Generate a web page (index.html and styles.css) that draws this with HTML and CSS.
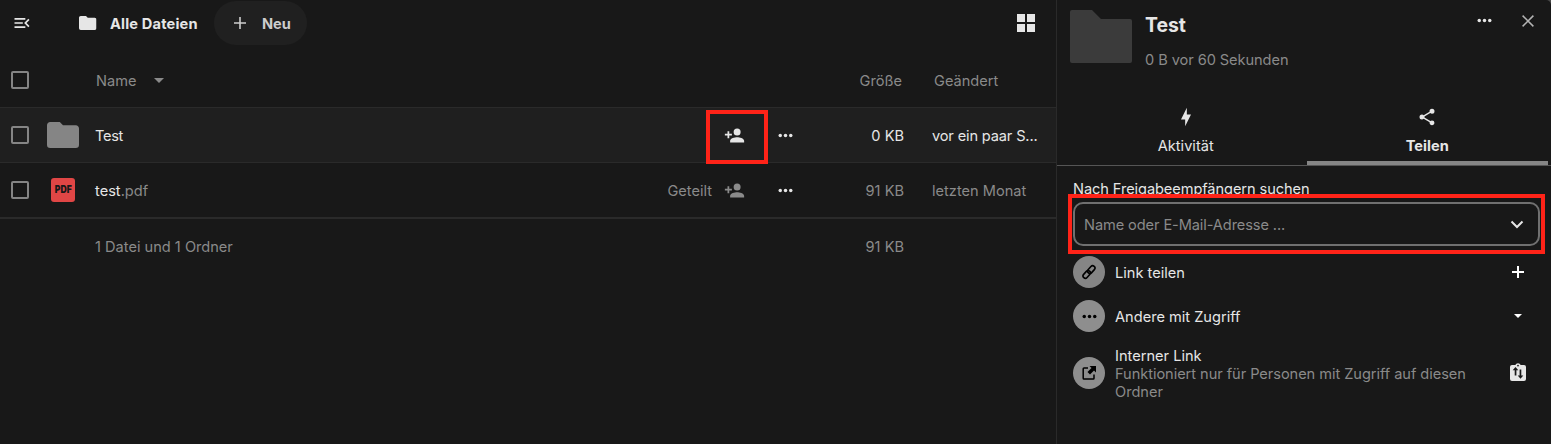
FILE: index.html
```html
<!DOCTYPE html>
<html lang="de">
<head>
<meta charset="utf-8">
<title>Alle Dateien</title>
<link rel="stylesheet" href="styles.css">
</head>
<body>
<svg class="defs" width="0" height="0">
  <symbol id="i-menu" viewBox="0 0 24 24"><path d="M21,15.61L19.59,17L14.58,12L19.59,7L21,8.39L17.44,12L21,15.61M3,6H16V8H3V6M3,13V11H13V13H3M3,18V16H16V18H3Z"/></symbol>
  <symbol id="i-folder" viewBox="2 4 20 16" preserveAspectRatio="none"><path d="M10,4H4C2.89,4 2,4.89 2,6V18A2,2 0 0,0 4,20H20A2,2 0 0,0 22,18V8C22,6.89 21.1,6 20,6H12L10,4Z"/></symbol>
  <symbol id="i-userplus" viewBox="0 0 24 24"><path d="M15,14C12.33,14 7,15.33 7,18V20H23V18C23,15.33 17.67,14 15,14M6,10V7H4V10H1V12H4V15H6V12H9V10M15,12A4,4 0 0,0 19,8A4,4 0 0,0 15,4A4,4 0 0,0 11,8A4,4 0 0,0 15,12Z"/></symbol>
  <symbol id="i-dots" viewBox="0 0 24 24"><circle cx="6" cy="12" r="2"/><circle cx="12" cy="12" r="2"/><circle cx="18" cy="12" r="2"/></symbol>
  <symbol id="i-share" viewBox="0 0 24 24"><path d="M18,16.08C17.24,16.08 16.56,16.38 16.04,16.85L8.91,12.7C8.96,12.47 9,12.24 9,12C9,11.76 8.96,11.53 8.91,11.3L15.96,7.19C16.5,7.69 17.21,8 18,8A3,3 0 0,0 21,5A3,3 0 0,0 18,2A3,3 0 0,0 15,5C15,5.24 15.04,5.47 15.09,5.7L8.04,9.81C7.5,9.31 6.79,9 6,9A3,3 0 0,0 3,12A3,3 0 0,0 6,15C6.79,15 7.5,14.69 8.04,14.19L15.16,18.34C15.11,18.55 15.08,18.77 15.08,19C15.08,20.61 16.39,21.91 18,21.91C19.61,21.91 20.92,20.61 20.92,19A2.92,2.92 0 0,0 18,16.08Z"/></symbol>
  <symbol id="i-bolt" viewBox="0 0 24 24"><path d="M11 15H6L13 1V9H18L11 23V15Z"/></symbol>
</svg>
<div class="app">
  <main class="files">
    <header class="bar">
      <svg class="ic20"><use href="#i-menu"/></svg>
      <svg class="crumb-folder"><use href="#i-folder"/></svg>
      <span class="crumb">Alle Dateien</span>
      <button class="new"><svg width="12" height="12" viewBox="0 0 12 12"><path d="M5.2 0h1.600v5.200H12v1.600H6.800V12H5.200V6.800H0V5.200h5.200z"/></svg><span class="t">Neu</span></button>
      <svg class="grid" width="18" height="18"><path d="M0 0h8v8H0zM10 0h8v8h-8zM0 10h8v8H0zM10 10h8v8h-8z"/></svg>
    </header>
    <div class="row head">
      <i class="check"></i><span></span>
      <span class="name"><span class="t">Name</span><svg width="10" height="5"><path d="M0 0h10L5 5z"/></svg></span>
      <span></span><span></span><span></span>
      <span class="size"><span class="t">Größe</span></span><span class="date"><span class="t">Geändert</span></span>
    </div>
    <div class="row active">
      <i class="check"></i><span class="thumb"><svg width="32" height="26"><use href="#i-folder"/></svg></span>
      <span class="name"><span class="t narrow">Test</span></span>
      <span></span><svg class="ic21"><use href="#i-userplus"/></svg><svg class="ic21"><use href="#i-dots"/></svg>
      <span class="size"><span class="t">0 KB</span></span><span class="date"><span class="t tight">vor ein paar S...</span></span>
    </div>
    <div class="row last">
      <i class="check"></i><span class="thumb"><span class="pdf"><b>PDF</b></span></span>
      <span class="name"><span class="t"><em>test</em>.pdf</span></span>
      <span class="shared"><span class="t">Geteilt</span></span><svg class="ic21"><use href="#i-userplus"/></svg><svg class="ic21 lit"><use href="#i-dots"/></svg>
      <span class="size"><span class="t">91 KB</span></span><span class="date"><span class="t">letzten Monat</span></span>
    </div>
    <div class="row sum">
      <span></span><span></span><span class="name"><span>1 Datei und 1 Ordner</span></span>
      <span></span><span></span><span></span><span class="size">91 KB</span><span></span>
    </div>
  </main>
  <aside class="side">
    <header class="info">
      <svg class="big" width="62" height="53" viewBox="0 0 62 53"><path d="M2 0H22L31 9H60a2 2 0 0 1 2 2V51a2 2 0 0 1-2 2H2a2 2 0 0 1-2-2V2a2 2 0 0 1 2-2z"/></svg>
      <div class="titles"><h1>Test</h1><p>0 B vor 60 Sekunden</p></div>
      <svg class="ic21 more"><use href="#i-dots"/></svg>
      <svg class="close" width="12" height="12" viewBox="0 0 12 12"><path d="M.6.6l10.800 10.800M11.400.6L.6 11.400"/></svg>
    </header>
    <nav class="tabs">
      <div class="tab"><svg class="ic20"><use href="#i-bolt"/></svg><span>Aktivität</span></div>
      <div class="tab on"><svg class="ic20"><use href="#i-share"/></svg><span>Teilen</span></div>
    </nav>
    <section class="share">
      <label>Nach Freigabeempfängern suchen</label>
      <div class="field"><span class="t">Name oder E-Mail-Adresse ...</span><svg width="14" height="9" viewBox="0 0 14 9"><path d="M1.500 1.500L7 7l5.500-5.500"/></svg></div>
      <div class="item"><span class="disc dim"><svg class="chain" width="16" height="16" viewBox="0 0 16 16"><rect x="-4.300" y="-2.300" width="8.600" height="4.600" rx="2.300" transform="translate(10.300 5.600) rotate(-48)"/><rect x="-4.300" y="-2.300" width="8.600" height="4.600" rx="2.300" transform="translate(5.700 10.400) rotate(-48)"/></svg></span><span class="t">Link teilen</span><svg class="act" width="12" height="12"><path d="M5 0h2v5h5v2H7v5H5V7H0V5h5z"/></svg></div>
      <div class="item"><span class="disc"><svg width="21" height="21"><use href="#i-dots"/></svg></span><span class="t">Andere mit Zugriff</span><svg class="act caret" width="8" height="4"><path d="M0 0h8L4 4z"/></svg></div>
      <div class="item tall"><span class="disc"><svg width="14" height="14" viewBox="0 0 14 14"><path d="M6 2H2Q1.200 2 1.200 2.800V12.200Q1.200 13 2 13H11.200Q12 13 12 12.200V8.500" fill="none" stroke="#000" stroke-width="1.500"/><path d="M7.500 0H14V6.500L12 4.500 8 8.500 5.500 6 9.500 2z"/></svg></span>
        <div class="txt">Interner Link<small><span class="tight">Funktioniert nur für Personen mit Zugriff auf diesen</span><br>Ordner</small></div>
        <svg class="act clip" width="16" height="18" viewBox="0 0 16 18"><path d="M2 2H5.300A2.900 2.900 0 0 1 10.700 2H14a2 2 0 0 1 2 2V16a2 2 0 0 1-2 2H2a2 2 0 0 1-2-2V4a2 2 0 0 1 2-2z"/><g fill="#181818"><circle cx="8" cy="2.600" r=".9"/><path d="M5.500 4L8.300 7.200H6.400V12.500H4.700V7.200H2.700zM10.500 15.800L7.700 12.600H9.600V6.600H11.300V12.600H13.300z"/></g></svg></div>
    </section>
  </aside>
  <div class="mark mark-user"></div>
  <div class="mark mark-field"></div>
</div>
</body>
</html>
```
FILE: styles.css
```css
* { box-sizing: border-box; }
body { margin: 0; background: #4a4a4a; font: 14.6px/18px Inter, "Liberation Sans", sans-serif; color: #e6e6e6; }
.defs { position: absolute; }
svg { display: block; fill: currentColor; }
.app { position: relative; display: flex; width: 1551px; height: 444px; background: #181818; border-top-right-radius: 5px; overflow: hidden; white-space: nowrap; }
.ic20 { width: 20px; height: 20px; }
.ic21 { width: 21px; height: 21px; }
.t { display: inline-block; padding-top: 1px; margin-bottom: -1px; }
.tight { letter-spacing: -.05px; }
.narrow { letter-spacing: -.3px; }

.files { width: 1057px; border-right: 1px solid #2a2a2a; }
.bar { display: flex; align-items: center; height: 53px; padding: 0 21px 7px 12px; }
.crumb-folder { width: 17.500px; height: 14px; margin-left: 47px; }
.crumb { width: 88px; font-weight: 700; letter-spacing: .18px; margin-left: 13.500px; padding-top: 1px; }
.new { display: flex; align-items: center; gap: 16px; width: 93px; height: 44px; margin-left: 16px; padding: 0 0 0 20px; border: 0; border-radius: 22px; background: #202020; color: #cdcdcd; font: inherit; font-weight: 700; }
.grid { margin-left: auto; }

.row { display: grid; grid-template-columns: 36px 48px 511px 118px 51px 29px 100px 1fr; align-items: center; height: 55px; padding-left: 11px; border-bottom: 1px solid #2a2a2a; color: #8a8a8a; }
.check { width: 18px; height: 18px; border: 2px solid #858585; border-radius: 2px; }
.thumb { color: #858585; }
.name { display: flex; align-items: center; gap: 18px; }
.name em { font-style: normal; color: #e6e6e6; }
.head .name { padding-left: 1px; }
.size { text-align: right; }
.head .size { padding-right: 2px; }
.date { padding-left: 28px; }
.date .tight { letter-spacing: -.15px; }
.head .date { padding-left: 30px; }
.active { background: #1f1f1f; color: #e6e6e6; }
.last { height: 56px; border-bottom-width: 2px; }
.sum { border: 0; height: 56px; }
.shared { text-align: right; padding-right: 12px; }
.lit { color: #e6e6e6; }
.pdf { display: flex; align-items: center; justify-content: center; width: 24px; height: 24px; margin-left: 4px; border-radius: 3px; background: #e04645; color: #181818; }
.pdf b { font-size: 10.500px; font-weight: 900; transform: scaleX(.82); }

.side { flex: 1; }
.info { display: flex; height: 104px; padding: 10px 17px 0 13px; }
.titles { padding: 4px 0 0 13px; flex: 1; }
h1 { margin: 0; font-size: 19.400px; line-height: 23px; font-weight: 700; }
p { margin: 14px 0 0; color: #8a8a8a; letter-spacing: -.07px; }
.big { color: #3b3b3b; }
.more { margin-right: 27px; }
.close { margin-top: 5px; fill: none; stroke: #b4b4b4; stroke-width: 1.500; }
.tabs { display: flex; height: 62px; padding: 0 3px 0 8px; border-bottom: 1px solid #555; }
.tab { flex: 1; display: flex; flex-direction: column; align-items: center; padding-top: 3px; gap: 10px; }
.on { font-weight: 700; border-bottom: 4px solid #858585; }
.share { padding: 14px 11px 0 16px; }
label { display: block; height: 22px; letter-spacing: -.08px; }
.field { display: flex; align-items: center; justify-content: space-between; height: 44px; padding: 0 14px 0 9px; border: 2px solid #707070; border-radius: 10px; color: #8a8a8a; letter-spacing: -.1px; }
.field svg { fill: none; stroke: #e6e6e6; stroke-width: 2; }
.item { display: flex; align-items: center; height: 44px; gap: 10px; padding-right: 16px; }
.field + .item { margin-top: 4px; }
.act { margin-left: auto; color: #fff; }
.caret { margin-right: 2px; }
.clip { margin-bottom: 2px; color: #e6e6e6; }
.disc { display: flex; align-items: center; justify-content: center; width: 32px; height: 32px; border-radius: 50%; background: #8e8e8e; color: #000; }
.dim { background: #858585; }
.chain { fill: none; stroke: #000; stroke-width: 1.600; }
.tall { height: 70px; padding-right: 14px; }
.txt { padding-top: 2px; }
small { display: block; font-size: inherit; color: #8a8a8a; }

.mark { position: absolute; border: 4px solid #ff2318; }
.mark-user { left: 706px; top: 110px; width: 62px; height: 54px; }
.mark-field { left: 1068px; top: 194px; width: 477px; height: 60px; }
```
